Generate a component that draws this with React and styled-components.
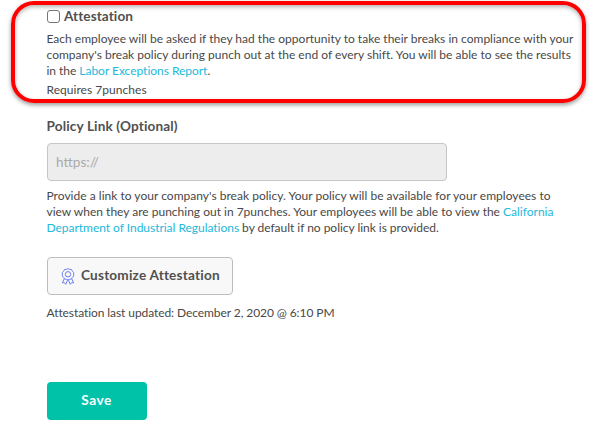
import styled, { createGlobalStyle } from "styled-components";

export default function App(){
    return(
    <>
        <GlobalStyle/>
        <Page>
            <Highlight>
                <CheckLabel>
                    <Checkbox type="checkbox"/>
                    <Title $spacing=".08px">Attestation</Title>
                </CheckLabel>
                <Help $top="5px">
                    <Line $spacing=".01px">Each employee will be asked if they had the opportunity to take their breaks in compliance with your</Line>
                    <Line $spacing=".01px">company's break policy during punch out at the end of every shift. You will be able to see the results</Line>
                    <Line $spacing="-.03px">in the <Link>Labor Exceptions Report</Link>.</Line>
                </Help>
                <Note $spacing=".04px">Requires 7punches</Note>
            </Highlight>
            <Form>
                <Title as="label" htmlFor="policy" $spacing=".14px">Policy Link (Optional)</Title>
                <Input id="policy" placeholder="https://" disabled/>
                <Help $top="7px">
                    <Line $spacing=".02px">Provide a link to your company's break policy. Your policy will be available for your employees to</Line>
                    <Line>view when they are punching out in 7punches. Your employees will be able to view the <Link>California</Link></Line>
                    <Line $spacing="-.03px"><Link>Department of Industrial Regulations</Link> by default if no policy link is provided.</Line>
                </Help>
                <Customize>
                    <AwardIcon/>
                    <span>Customize Attestation</span>
                </Customize>
                <Updated $spacing="-.08px">Attestation last updated: December 2, 2020 @ 6:10 PM</Updated>
                <Save>Save</Save>
            </Form>
        </Page>
    </>
    );
}

function AwardIcon(){
    return(
        <svg width="14" height="17" viewBox="0 0 14 17" fill="none" stroke="#6b80f0" strokeWidth="1" strokeLinejoin="round">
            <path d="M7 .8l1.7.5 1.8.3.9 1.6 1.3 1.3-.1 1.8.1 1.8-1.3 1.3-.9 1.5-1.8.4-1.7.6-1.7-.6-1.8-.4-.9-1.5L1.3 8.1l.1-1.8-.1-1.8L2.6 3.2l.9-1.6 1.8-.3z"/>
            <circle cx="7" cy="6.3" r="2.7"/>
            <path d="M3.3 10.8L1.3 14.8l2.2-.1 1.2 1.600 1.900-4.200M10.700 10.800l2 4-2.200-.1-1.200 1.600-1.900-4.200"/>
        </svg>
    );
}

const GlobalStyle=createGlobalStyle`
    *{
        box-sizing: border-box;
    }
    body{
        margin: 0;
        background-color: #fff;
        color: #484848;
        font-family: Lato, "Liberation Sans", sans-serif;
        font-size: 12px;
        font-variant-ligatures: none;
    }
    input, button{
        font-family: inherit;
    }
`
const Page=styled.main`
    width: 606px;
    height: 434px;
    padding: 1px 0 0 11px;
    overflow: hidden;
`
const Highlight=styled.section`
    width: 575px;
    height: 102px;
    padding: 1px 0 0 31.5px;
    border: 4px solid #fe0000;
    border-radius: 23px;
    box-shadow: 0 2px 4px rgba(0,0,0,.4), inset 0 2px 4px rgba(0,0,0,.3);
`
const CheckLabel=styled.label`
    display: flex;
    align-items: center;
    height: 20px;
    gap: 4px;
`
const Checkbox=styled.input`
    appearance: none;
    width: 13px;
    height: 13px;
    margin: 0 0 0 .5px;
    border: 1px solid #767676;
    border-radius: 3px;
    background-color: #fff;
`
const Title=styled.span`
    color: #505050;
    font-size: 13.6px;
    font-weight: 700;
    line-height: 20px;
    white-space: nowrap;
    letter-spacing: ${({$spacing})=>$spacing||"0"};
`
const Help=styled.p`
    margin: ${({$top})=>$top} 0 0;
`
const Line=styled.span`
    display: block;
    width: max-content;
    line-height: 16px;
    white-space: nowrap;
    letter-spacing: ${({$spacing})=>$spacing||"0"};
`
const Link=styled.a`
    color: #22b9db;
`
const Note=styled(Line)`
    margin-top: 3px;
`
const Form=styled.form`
    display: flex;
    flex-direction: column;
    align-items: flex-start;
    padding: 13px 0 0 35.5px;
`
const Input=styled.input`
    width: 400px;
    height: 38px;
    margin: 7px 0 0 .5px;
    padding: 0 8px 1px;
    border: 1px solid #c6c6c6;
    border-radius: 4px;
    background-color: #ededed;
    font-size: 13.6px;
    &::placeholder{
        color: #a9a9a9;
    }
`
const Customize=styled.button`
    display: flex;
    align-items: center;
    gap: 6px;
    width: 186px;
    height: 38px;
    margin: 21px 0 0 .5px;
    padding: 0 0 0 13px;
    border: 1px solid #bdbdbd;
    border-radius: 4px;
    background-color: #f8f8f8;
    color: #505050;
    font-size: 13.6px;
    font-weight: 700;
    letter-spacing: .2px;
    white-space: nowrap;
    span{
        padding-bottom: 2px;
    }
`
const Updated=styled(Line)`
    margin-top: 10px;
`
const Save=styled.button`
    width: 100px;
    height: 38px;
    margin: 61px 0 0 .5px;
    padding: 0 1px 2px 0;
    border: 0;
    border-radius: 4px;
    background-color: #00c2a9;
    color: #fff;
    font-size: 13.6px;
    font-weight: 700;
    letter-spacing: .5px;
`
